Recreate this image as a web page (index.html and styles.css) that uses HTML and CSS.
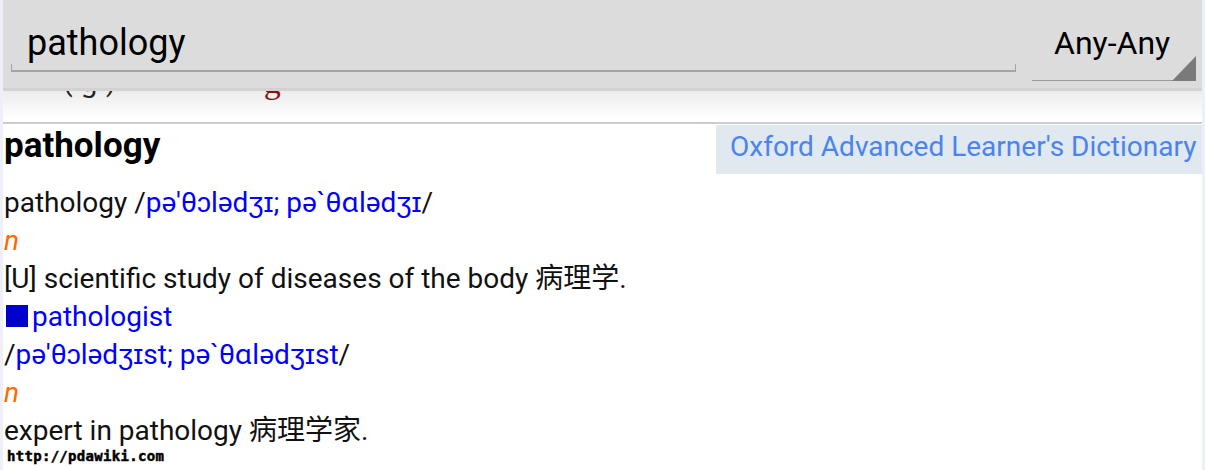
FILE: index.html
```html
<!DOCTYPE html>
<html>
<head>
<meta charset="utf-8">
<link rel="stylesheet" href="styles.css">
</head>
<body>
<div class="app">
  <div class="toolbar">
    <div class="search">
      <div class="search-text">pathology</div>
      <div class="search-line"></div>
    </div>
    <div class="spinner">
      <div class="spinner-text">Any-Any</div>
      <div class="spinner-line"></div>
      <div class="spinner-tri"></div>
    </div>
  </div>
  <div class="content">
    <div class="peek">
      <div class="peek-line"><span class="peek-a">(ɡ)</span><span class="peek-b">g</span></div>
    </div>
    <div class="divider"></div>
    <div class="entry-head">
      <div class="headword">pathology</div>
      <div class="dict-label">Oxford Advanced Learner's Dictionary</div>
    </div>
    <div class="entry">
      <div class="line">pathology /<span class="ph">pə'θɔlədʒɪ; pə`θɑlədʒɪ</span>/</div>
      <div class="line"><span class="pos">n</span></div>
      <div class="line">[U] scientific study of diseases of the body 病理学.</div>
      <div class="line"><span class="sq"></span><span class="ph">pathologist</span></div>
      <div class="line">/<span class="ph">pə'θɔlədʒɪst; pə`θɑlədʒɪst</span>/</div>
      <div class="line"><span class="pos">n</span></div>
      <div class="line">expert in pathology 病理学家.</div>
    </div>
    <div class="watermark">http://pdawiki.com</div>
  </div>
</div>
</body>
</html>
```
FILE: styles.css
```css
html, body {
  margin: 0;
  padding: 0;
}
body {
  background: #eef0f8;
  font-family: Roboto, "Noto Sans CJK SC", sans-serif;
  width: 1205px;
  height: 470px;
  overflow: hidden;
}
.app {
  margin: 0 3px;
  height: 470px;
  background: #ffffff;
  overflow: hidden;
}
.toolbar {
  height: 88px;
  background: #dcdcdc;
  border-bottom: 3px solid #d2d2d2;
  display: flex;
  align-items: flex-start;
}
.search {
  width: 1005px;
  margin-left: 8px;
  padding-top: 23px;
}
.search-text {
  font-size: 36px;
  line-height: 41px;
  color: #000;
  padding-left: 16px;
  height: 41px;
}
.search-line {
  height: 6px;
  border-left: 1px solid #a4a4a4;
  border-right: 1px solid #a4a4a4;
  border-bottom: 2px solid #a4a4a4;
}
.spinner {
  position: relative;
  margin-left: 16px;
  width: 164px;
  padding-top: 22px;
}
.spinner-text {
  font-size: 32px;
  line-height: 43px;
  height: 43px;
  padding-left: 22px;
  color: #000;
}
.spinner-line {
  margin-top: 15px;
  width: 148px;
  height: 0;
  border-bottom: 1px solid #9a9a9a;
}
.spinner-tri {
  position: absolute;
  right: 0;
  bottom: 0;
  width: 0;
  height: 0;
  border-left: 24px solid transparent;
  border-bottom: 25px solid #7a7a7a;
}
.content {
  position: relative;
}
.peek {
  height: 31px;
  overflow: hidden;
  background: linear-gradient(to bottom, #ececec, #ffffff 90%);
}
.peek-line {
  margin-top: -28px;
  font-size: 28px;
  line-height: 38px;
  display: flex;
}
.peek-a {
  margin-left: 60px;
  color: #222;
  letter-spacing: 8px;
}
.peek-b {
  margin-left: 140px;
  color: #8b1010;
  font-family: "Liberation Serif", serif;
  font-size: 34px;
}
.divider {
  height: 2px;
  background: #cdcdcd;
}
.entry-head {
  display: flex;
  justify-content: space-between;
  align-items: flex-start;
}
.headword {
  font-size: 35px;
  font-weight: bold;
  line-height: 40px;
  padding-top: 2px;
  padding-left: 1px;
  color: #000;
}
.dict-label {
  margin-top: 1px;
  background: #e0e8f0;
  color: #4a84ec;
  font-size: 28px;
  line-height: 43px;
  height: 43px;
  padding-bottom: 6px;
  width: 472px;
  padding-left: 14px;
  white-space: nowrap;
}
.entry {
  padding-left: 1px;
  padding-top: 10px;
}
.line {
  font-size: 28px;
  line-height: 38px;
  height: 38px;
  color: #111;
  white-space: nowrap;
}
.ph {
  color: #0000ff;
}
.pos {
  color: #ff6a00;
  font-style: italic;
}
.sq {
  display: inline-block;
  width: 22px;
  height: 22px;
  background: #0000cc;
  margin-left: 2px;
  margin-right: 4px;
  vertical-align: -1px;
}
.watermark {
  position: absolute;
  left: 4px;
  top: 357px;
  font-family: "DejaVu Sans Mono", monospace;
  font-weight: bold;
  font-size: 14px;
  color: #000;
  letter-spacing: 0.3px;
  -webkit-text-stroke: 0.5px #000;
}
```
